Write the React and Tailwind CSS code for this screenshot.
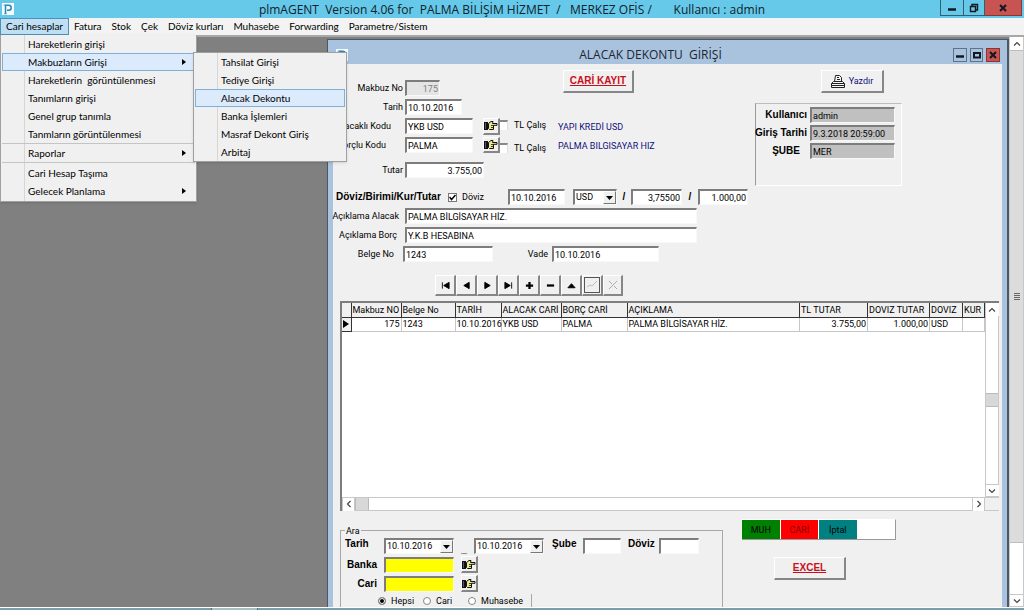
import { useState } from 'react'
import clsx from 'clsx'

const MENU_BAR = ['Cari hesaplar', 'Fatura', 'Stok', 'Çek', 'Döviz kurları', 'Muhasebe', 'Forwarding', 'Parametre/Sistem']

const MENU_GROUPS = [
  [
    { label: 'Hareketlerin girişi' },
    { label: 'Makbuzların Girişi', sub: true, active: true },
    { label: 'Hareketlerin  görüntülenmesi' },
    { label: 'Tanımların girişi' },
    { label: 'Genel grup tanımla' },
    { label: 'Tanmların görüntülenmesi' },
  ],
  [{ label: 'Raporlar', sub: true }],
  [{ label: 'Cari Hesap Taşıma' }, { label: 'Gelecek Planlama', sub: true }],
]

const SUB_MENU = ['Tahsilat Girişi', 'Tediye Girişi', 'Alacak Dekontu', 'Banka İşlemleri', 'Masraf Dekont Giriş', 'Arbitaj']

const COLUMNS = [
  { name: 'Makbuz NO', width: 'w-[50px]', value: '175', right: true },
  { name: 'Belge No', width: 'w-[54px]', value: '1243' },
  { name: 'TARİH', width: 'w-[46px]', value: '10.10.2016' },
  { name: 'ALACAK CARİ', width: 'w-[60px]', value: 'YKB USD' },
  { name: 'BORÇ CARİ', width: 'w-[66px]', value: 'PALMA' },
  { name: 'AÇIKLAMA', width: '', value: 'PALMA BİLGİSAYAR HİZ.' },
  { name: 'TL TUTAR', width: 'w-[68px]', value: '3.755,00', right: true },
  { name: 'DOVIZ TUTAR', width: 'w-[62px]', value: '1.000,00', right: true },
  { name: 'DOVIZ', width: 'w-[33px]', value: 'USD' },
  { name: 'KUR', width: 'w-[22px]', value: '' },
]

const SUNKEN = 'border-t-2 border-l-2 border-r border-b border-t-[#7d7d7d] border-l-[#7d7d7d] border-r-[#f8f8f8] border-b-[#f8f8f8]'
const RAISED = 'bg-[#f0f0f0] border-t border-l border-r-2 border-b-2 border-t-white border-l-white border-r-[#868686] border-b-[#868686]'
const BOLD = "font-bold text-[10px] font-['Liberation_Sans',sans-serif] whitespace-nowrap"

function AppIcon({ className }) {
  return (
    <svg viewBox="0 0 12 12" className={className} aria-hidden="true">
      <rect width="12" height="12" fill="#f4fbff" />
      <path d="M3.5 11V2.2h3.2a2.4 2.4 0 0 1 0 5H5" fill="none" stroke="#2d84b5" strokeWidth="1.5" />
      <path d="M1.5 2.2h3M2 10.8h3" stroke="#4a9cc6" strokeWidth="0.8" />
    </svg>
  )
}

function HandIcon() {
  return (
    <svg viewBox="0 0 14 11" className="w-[14px] h-[11px]" aria-hidden="true">
      <rect x="0" y="2" width="4" height="8" fill="#111" />
      <rect x="1" y="3" width="1" height="6" fill="#557" />
      <path d="M4.500 3.500L7 1.500h2L8.500 3.500H13v1.800H9.500v4.200H5.500L4.500 8.500z" fill="#efe98a" stroke="#111" />
      <path d="M7 5.500h2.500M7 7.500h2.500" stroke="#111" strokeWidth="0.8" />
    </svg>
  )
}

function HandButton({ label }) {
  return (
    <button aria-label={label} className={clsx('w-[17px] h-[17px] flex items-center justify-center', RAISED)}>
      <HandIcon />
    </button>
  )
}

function Chevron({ d, className }) {
  return (
    <button aria-label="Kaydır" className={clsx('w-[13px] h-[13px] shrink-0 bg-white border border-[#c8c8c8] flex items-center justify-center', className)}>
      <svg viewBox="0 0 8 8" className="w-[8px] h-[8px]">
        <path d={d} fill="none" stroke="#444" strokeWidth="1.2" />
      </svg>
    </button>
  )
}

const UP = 'M1 5.500L4 2.500L7 5.500'
const DOWN = 'M1 2.500L4 5.500L7 2.500'
const LEFT = 'M5.500 1L2.500 4L5.500 7'
const RIGHT = 'M2.500 1L5.500 4L2.500 7'

function Field({ className, bg = 'bg-white', ...props }) {
  return <input type="text" className={clsx('h-4 px-[1px] outline-none', bg, SUNKEN, className)} {...props} />
}

function Row({ id, label, labelClass, children }) {
  return (
    <div className="flex items-center gap-[2px]">
      <label htmlFor={id} className={clsx('w-[70px] shrink-0 flex justify-end whitespace-nowrap', labelClass)}>{label}</label>
      {children}
    </div>
  )
}

function Combo({ label, value, className }) {
  return (
    <div className={clsx('relative h-4 bg-white', SUNKEN, className)}>
      <select aria-label={label} defaultValue={value} className="block w-full h-full appearance-none bg-transparent px-[1px] leading-[13px] outline-none">
        <option>{value}</option>
      </select>
      <span className="absolute right-0 top-0 bottom-0 w-[13px] pointer-events-none bg-[#f0f0f0] border border-t-white border-l-white border-r-[#777] border-b-[#777] flex items-center justify-center">
        <svg viewBox="0 0 7 4" className="w-[7px] h-[4px]"><path d="M0 0h7L3.500 4z" fill="#000" /></svg>
      </span>
    </div>
  )
}

function TlCheck() {
  return (
    <label className="flex items-center gap-[6px] h-4">
      <input type="checkbox" className="appearance-none w-[8px] h-[10px] bg-white border-t-2 border-t-[#888] border-r border-r-[#ddd]" />
      TL Çalış
    </label>
  )
}

function WindowButton({ label, className, children }) {
  return (
    <button aria-label={label} className={clsx('flex items-center justify-center border', className)}>
      <svg viewBox="0 0 10 10" className="w-[10px] h-[10px]" fill="none" stroke="#101820">{children}</svg>
    </button>
  )
}

function MenuItem({ label, sub, active }) {
  return (
    <li>
      <button
        role="menuitem"
        className={clsx(
          'w-full h-[18px] flex items-center justify-between pl-[25px] pr-[8px] text-left whitespace-pre border',
          active ? 'bg-[#dcebfc] border-[#7fb0d8]' : 'border-transparent'
        )}
      >
        {label}
        {sub && <svg viewBox="0 0 4 6" className="w-[4px] h-[6px]"><path d="M0 0L4 3L0 6z" fill="#000" /></svg>}
      </button>
    </li>
  )
}

function CariMenu() {
  return (
    <div className="absolute left-0 top-full z-20 w-[197px] bg-[#f0f0f0] border border-t-0 border-[#a0a0a0] shadow-sm">
      <div className="absolute left-[23px] top-0 bottom-0 w-px bg-[#d6d6d6]" />
      <div className="relative px-px pb-px">
        {MENU_GROUPS.map((group, i) => (
          <ul key={i} role="menu" className={clsx(i > 0 && 'border-t border-[#c4c4c4]', i === 2 && 'pt-px')}>
            {group.map(item => <MenuItem key={item.label} {...item} />)}
          </ul>
        ))}
      </div>
      <div className="absolute left-[192px] top-[17px] w-[154px] bg-[#f0f0f0] border border-[#a0a0a0] shadow-sm">
        <div className="absolute left-[23px] top-0 bottom-0 w-px bg-[#d6d6d6]" />
        <ul role="menu" className="relative px-px">
          {SUB_MENU.map(label => <MenuItem key={label} label={label} active={label === 'Alacak Dekontu'} />)}
        </ul>
      </div>
    </div>
  )
}

const NAV_ICONS = [
  ['İlk', <path d="M1.500 1.500v7M9 1.500v7L3 5z" />],
  ['Önceki', <path d="M8 1.500v7L2 5z" />],
  ['Sonraki', <path d="M2 1.500v7L8 5z" />],
  ['Son', <path d="M8.500 1.500v7M1 1.500v7L7 5z" />],
  ['Ekle', <path d="M5 1v8M1 5h8" strokeWidth="2.500" />],
  ['Sil', <path d="M1 5h8" strokeWidth="2.500" />],
  ['Düzenle', <path d="M1 7.500h8L5 3z" />],
]

function Navigator() {
  return (
    <div className="flex h-[21px]">
      {NAV_ICONS.map(([label, icon]) => (
        <button key={label} aria-label={label} className={clsx('w-[21px] flex items-center justify-center', RAISED)}>
          <svg viewBox="0 0 10 10" className="w-[9px] h-[9px]" fill="#000" stroke="#000">{icon}</svg>
        </button>
      ))}
      <button aria-label="Kaydet" className={clsx('w-[21px] p-px', RAISED)}>
        <svg viewBox="0 0 16 16" className="w-full h-full" fill="none">
          <rect x="0.500" y="0.500" width="15" height="15" stroke="#555" />
          <path d="M3 10l3-2 2 1 5-5" stroke="#bbb" />
        </svg>
      </button>
      <button aria-label="Vazgeç" className={clsx('w-[20px] flex items-center justify-center', RAISED)}>
        <svg viewBox="0 0 10 10" className="w-[10px] h-[10px]" fill="none" stroke="#aaa"><path d="M1 1l3 3M6 6l3 3M9 1L1 9" /></svg>
      </button>
    </div>
  )
}

function RecordGrid() {
  return (
    <div className="h-[210px] bg-white border-t-2 border-l-2 border-[#7d7d7d] flex flex-col">
      <div className="flex-1 flex min-h-0">
        <div className="flex-1 min-w-0">
          <table className="w-full table-fixed border-collapse leading-[12px] whitespace-nowrap">
            <thead>
              <tr className="h-[14px] bg-[#f0f0f0]">
                <th className="w-[9px] border-r border-b border-[#333]" aria-label="Seçim" />
                {COLUMNS.map(c => (
                  <th key={c.name} className={clsx('p-0 pl-[1px] font-normal text-left border-r border-b border-[#333]', c.width)}>{c.name}</th>
                ))}
              </tr>
            </thead>
            <tbody>
              <tr className="h-[14px]">
                <td className="p-0 bg-[#f0f0f0] border-r border-b border-[#333]">
                  <svg viewBox="0 0 6 8" className="w-[6px] h-[8px] ml-px"><path d="M0 0L6 4L0 8z" fill="#000" /></svg>
                </td>
                {COLUMNS.map(c => (
                  <td key={c.name} className={clsx('p-0 px-[1px] border-r border-b border-[#c6c6c6]', c.right && 'text-right')}>{c.value}</td>
                ))}
              </tr>
            </tbody>
          </table>
        </div>
        <div className="w-[14px] border-x border-[#c8c8c8] flex flex-col items-center">
          <Chevron d={UP} className="border-0" />
          <div className="flex-1" />
          <div className="w-full h-[14px] bg-[#d8d8d8] border-y border-[#bbb]" />
          <div className="h-[77px]" />
          <Chevron d={DOWN} className="border-x-0" />
        </div>
      </div>
      <div className="h-[14px] flex items-center border-y border-[#c8c8c8]">
        <Chevron d={LEFT} className="border-y-0" />
        <div className="w-[14px] h-full bg-[#d8d8d8] border-x border-[#bbb]" />
        <div className="flex-1" />
        <Chevron d={RIGHT} className="border-y-0" />
        <div className="w-[14px] h-full bg-[#f0f0f0]" />
      </div>
    </div>
  )
}

function UserPanel() {
  const rows = [['Kullanıcı', 'admin'], ['Giriş Tarihi', '9.3.2018 20:59:00'], ['ŞUBE', 'MER']]
  return (
    <div className="w-[147px] h-[83px] border border-t-[#bdbdbd] border-l-[#999] border-r-white border-b-white pt-[3px] flex flex-col gap-[2px]">
      {rows.map(([label, value]) => (
        <div key={label} className="flex items-center gap-[3px]">
          <label htmlFor={label} className={clsx('w-[51px] flex justify-end', BOLD, label === 'ŞUBE' && 'pr-[7px]')}>{label}</label>
          <Field id={label} readOnly defaultValue={value} bg="bg-[#c0c0c0]" className="w-[85px]" />
        </div>
      ))}
    </div>
  )
}

function SearchPanel() {
  const [kind, setKind] = useState('Hepsi')
  return (
    <fieldset className="relative w-[383px] h-[90px] border border-[#a8a8a8] pt-[7px]">
      <legend className="absolute left-[4px] top-[-6px] px-px leading-[12px] bg-[#f0f0f0]">Ara</legend>
      <div className="flex items-start pl-[4px] leading-[11px]">
        <span className={clsx('w-[39px]', BOLD)}>Tarih</span>
        <Combo label="Başlangıç tarihi" value="10.10.2016" className="w-[70px]" />
        <span className={clsx('w-[20px] self-end text-center', BOLD)}>_</span>
        <Combo label="Bitiş tarihi" value="10.10.2016" className="w-[70px]" />
        <label htmlFor="sube" className={clsx('w-[39px] pl-[8px]', BOLD)}>Şube</label>
        <Field id="sube" className="w-[38px]" />
        <label htmlFor="doviz-ara" className={clsx('w-[38px] pl-[7px]', BOLD)}>Döviz</label>
        <Field id="doviz-ara" className="w-[40px]" />
      </div>
      {['Banka', 'Cari'].map(name => (
        <div key={name} className="flex items-center mt-[2px] pl-[2px]">
          <label htmlFor={name} className={clsx('w-[41px] pr-[7px] flex justify-end', BOLD)}>{name}</label>
          <Field id={name} bg="bg-[#ffff00]" className="w-[70px]" />
          <span className="ml-[7px]"><HandButton label={`${name} seç`} /></span>
        </div>
      ))}
      <div className="flex items-center mt-[2px] ml-[37px] w-[154px] gap-[9px] border-r border-[#a8a8a8]">
        {['Hepsi', 'Cari', 'Muhasebe'].map(name => (
          <label key={name} className={clsx('flex items-center gap-[5px]', name === 'Muhasebe' && 'pl-[7px]')}>
            <input
              type="radio"
              name="tur"
              checked={kind === name}
              onChange={() => setKind(name)}
              className="appearance-none w-[8px] h-[8px] rounded-full border border-[#888] bg-white checked:bg-black checked:shadow-[inset_0_0_0_1px_white]"
            />
            {name}
          </label>
        ))}
      </div>
    </fieldset>
  )
}

function DekontForm() {
  return (
    <form className="flex-1 bg-[#f0f0f0] pr-[3px]" onSubmit={e => e.preventDefault()}>
      <div className="flex h-[125px] pt-[6px]">
        <div className="w-[225px] pt-[10px] flex flex-col gap-[3px]">
          <Row id="makbuz" label="Makbuz No"><Field id="makbuz" disabled defaultValue="175" bg="bg-[#e4e4e4]" className="w-[35px] text-right text-[#808080]" /></Row>
          <Row id="tarih" label="Tarih"><Field id="tarih" defaultValue="10.10.2016" className="w-[57px]" /></Row>
          <div className="flex h-[35px]">
            <div className="flex flex-col gap-[3px]">
              <Row id="alacakli" label="Alacaklı Kodu" labelClass="pr-[12px]"><Field id="alacakli" defaultValue="YKB USD" className="w-[68px]" /></Row>
              <Row id="borclu" label="Borçlu Kodu" labelClass="pr-[17px]"><Field id="borclu" defaultValue="PALMA" className="w-[68px]" /></Row>
            </div>
            <div className="ml-[10px] flex flex-col gap-[2px]">
              <HandButton label="Alacaklı seç" />
              <HandButton label="Borçlu seç" />
            </div>
            <div className="flex flex-col gap-[9px] whitespace-nowrap">
              <TlCheck />
              <TlCheck />
            </div>
          </div>
          <div className="mt-[6px]">
            <Row id="tutar" label="Tutar"><Field id="tutar" defaultValue="3.755,00" className="w-[79px] text-right" /></Row>
          </div>
        </div>
        <div className="w-[197px] text-[#10107c]">
          <button className={clsx('ml-[5px] w-[71px] h-[23px] text-[#c8101c] underline', BOLD, RAISED)}>CARİ KAYIT</button>
          <div className="mt-[26px] leading-[16px] flex flex-col gap-[3px]">
            <span>YAPI KREDİ USD</span>
            <span>PALMA BILGISAYAR HIZ</span>
          </div>
        </div>
        <div>
          <button className={clsx('ml-[66px] mb-[10px] w-[63px] h-[23px] flex items-center justify-center gap-[4px] text-[#10107c]', RAISED)}>
            <svg viewBox="0 0 14 13" className="w-[14px] h-[13px]" fill="#f4f4f4" stroke="#222">
              <path d="M3.500 6.500L4.500 0.500h4l2 2v4" />
              <path d="M6 2.500h2M6 4.500h3" />
              <path d="M0.500 8.500l2-2h9l2 2v4h-13zM0.500 8.500h13M0.500 10.500h13" />
            </svg>
            Yazdır
          </button>
          <UserPanel />
        </div>
      </div>

      <div className="flex flex-col gap-[3px]">
        <div className="flex items-center pl-[3px]">
          <span className={clsx('w-[112px]', BOLD)}>Döviz/Birimi/Kur/Tutar</span>
          <label className="relative w-[60px] flex items-center gap-[5px]">
            <input type="checkbox" defaultChecked className="peer appearance-none w-[9px] h-[9px] bg-white border border-[#777]" />
            <svg viewBox="0 0 7 7" className="absolute left-px top-[4px] w-[7px] h-[7px] hidden peer-checked:block" fill="none" stroke="#000" strokeWidth="1.500"><path d="M0.500 3L2.500 5.500L6.500 1" /></svg>
            Döviz
          </label>
          <Field aria-label="Döviz tarihi" defaultValue="10.10.2016" className="w-[57px]" />
          <Combo label="Birim" value="USD" className="w-[44px] ml-[8px]" />
          <span className={clsx('w-[14px] text-center', BOLD)}>/</span>
          <Field aria-label="Kur" defaultValue="3,75500" className="w-[51px] text-right" />
          <span className={clsx('w-[16px] text-center', BOLD)}>/</span>
          <Field aria-label="Döviz tutarı" defaultValue="1.000,00" className="w-[50px] text-right" />
        </div>
        <Row id="acik-alacak" label="Açıklama Alacak" labelClass="pr-[4px]"><Field id="acik-alacak" defaultValue="PALMA BİLGİSAYAR HİZ." className="w-[292px]" /></Row>
        <Row id="acik-borc" label="Açıklama Borç" labelClass="pr-[6px]"><Field id="acik-borc" defaultValue="Y.K.B HESABINA" className="w-[292px]" /></Row>
        <div className="flex items-center">
          <label htmlFor="belge" className="w-[70px] pr-[9px] text-right">Belge No</label>
          <Field id="belge" defaultValue="1243" className="w-[90px]" />
          <label htmlFor="vade" className="w-[59px] pr-[4px] text-right">Vade</label>
          <Field id="vade" defaultValue="10.10.2016" className="w-[107px]" />
        </div>
      </div>

      <div className="pl-[102px] pt-[13px] pb-[5px]"><Navigator /></div>
      <div className="pl-[7px]"><RecordGrid /></div>

      <div className="flex pl-[7px] pt-[8px] gap-[19px]">
        <div className="pt-[11px]"><SearchPanel /></div>
        <div>
          <div className="flex w-[154px] h-[21px] gap-px leading-[20px] text-center bg-white border border-l-0 border-white border-r-[#999] border-b-[#999]">
            <span className="flex-1 bg-[#008000]">MUH</span>
            <span className="flex-1 bg-[#ff0000] text-[#7c0000]">CARİ</span>
            <span className="flex-1 bg-[#008080]">İptal</span>
            <span className="flex-1" />
          </div>
          <button className={clsx('mt-[17px] ml-[32px] w-[72px] h-[23px] text-[#c8101c] underline', BOLD, RAISED)}>EXCEL</button>
        </div>
      </div>
    </form>
  )
}

export default function App() {
  return (
    <div className="h-screen flex flex-col overflow-hidden bg-[#f0f0f0] text-black text-[9px] leading-[14px] font-['Roboto',sans-serif]">
      {/* Title bar */}
      <header className="h-[18px] shrink-0 grid grid-cols-[1fr_auto_1fr] bg-[#66c9ea]">
        <AppIcon className="w-[12px] h-[12px] ml-[2px] mt-[3px]" />
        <h1 className="text-[12px] leading-[19px] whitespace-pre font-['Open_Sans',sans-serif] text-[#10222c]">plmAGENT  Version 4.06 for  PALMA BİLİŞİM HİZMET  /   MERKEZ OFİS /       Kullanıcı : admin</h1>
        <div className="flex h-4 justify-self-end pr-[2px]">
          <WindowButton label="Simge durumuna küçült" className="w-[24px] border-t-0 border-[#30606f]"><path d="M1 6.500h8" strokeWidth="2.500" /></WindowButton>
          <WindowButton label="Önceki boyut" className="w-[21px] border-t-0 border-l-0 border-[#30606f]"><path d="M3 3V1.500h5.500V7H7M1.500 3.500h5v5h-5z" strokeWidth="1.400" /></WindowButton>
          <WindowButton label="Kapat" className="w-[37px] border-t-0 border-l-0 border-[#8a3530] bg-[#c75450]"><path d="M2 2l6 6M8 2L2 8" strokeWidth="2" /></WindowButton>
        </div>
      </header>

      {/* Menu bar */}
      <nav className="relative h-[17px] shrink-0 flex bg-[#f3f3f3] text-[10px] font-['Lato',sans-serif]">
        {MENU_BAR.map((name, i) => (
          <button key={name} className={clsx('border whitespace-nowrap leading-[13px]', i === 0 ? 'px-[5px] bg-[#bfe0f4] border-[#4f90b8]' : 'px-[4px] border-transparent')}>{name}</button>
        ))}
        <CariMenu />
      </nav>

      {/* MDI area */}
      <main className="flex-1 min-h-0 flex border-t-2 border-[#a8a8a8] overflow-hidden">
        <div className="flex-1 min-w-0 flex bg-[#808080] pt-[2px] pl-[327px]">
          <section className="flex-1 min-w-0 flex flex-col border-t border-l border-r-2 border-[#4c5866] bg-[#a9c2de] px-[5px]">
            <div className="h-[24px] pt-[6px] shrink-0 flex items-center">
              <AppIcon className="w-[12px] h-[12px] ml-[3px]" />
              <h2 className="flex-1 text-center whitespace-pre text-[12px] font-['Open_Sans',sans-serif] text-[#1c2733]">ALACAK DEKONTU  GİRİŞİ</h2>
              <div className="flex gap-[3px] h-[14px] pr-[2px]">
                <WindowButton label="Küçült" className="w-[14px] border-[#5f7388]"><path d="M1 6.500h8" strokeWidth="2.500" /></WindowButton>
                <WindowButton label="Büyüt" className="w-[13px] border-[#5f7388]"><path d="M2 3h6v4.500H2z" strokeWidth="2" /></WindowButton>
                <WindowButton label="Pencereyi kapat" className="w-[14px] border-[#8a3530] bg-[#c75450]"><path d="M2 2l6 6M8 2L2 8" strokeWidth="2" /></WindowButton>
              </div>
            </div>
            <DekontForm />
          </section>
        </div>
        <div className="w-[15px] flex flex-col items-center bg-white border-x border-[#c8c8c8]">
          <Chevron d={UP} className="border-0" />
          <div className="w-full flex-1 bg-[#dcdcdc] border-y border-[#bdbdbd] flex items-center justify-center">
            <svg viewBox="0 0 6 7" className="w-[6px] h-[7px]"><path d="M0 0.500h6M0 2.500h6M0 4.500h6M0 6.500h6" stroke="#666" /></svg>
          </div>
          <div className="h-[51px]" />
          <Chevron d={DOWN} className="border-x-0" />
        </div>
      </main>

      {/* Edge of the taskbar */}
      <footer className="h-[3px] shrink-0 bg-[#7a9fa8] border-t border-white">
        <div className="ml-[211px] w-[47px] h-full bg-[#a9bfc4] border-x border-[#55727a]" />
      </footer>
    </div>
  )
}
